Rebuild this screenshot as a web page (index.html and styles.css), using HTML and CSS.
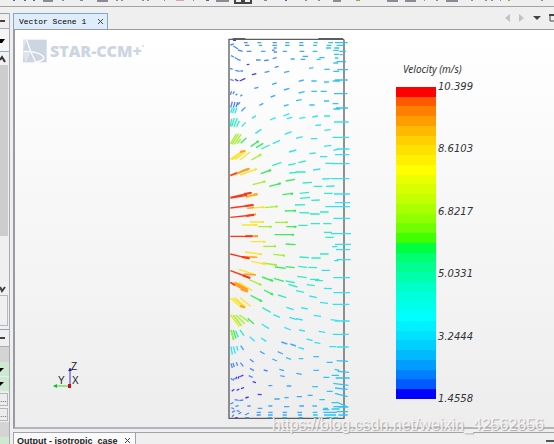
FILE: index.html
```
<!DOCTYPE html>
<html>
<head>
<meta charset="utf-8">
<title>Vector Scene 1</title>
<meta name="viewport" content="width=device-width, initial-scale=1.0">
<link rel="stylesheet" href="styles.css">
</head>
<body>
<div class="toolbar">
	<svg class="tools" height="4" aria-hidden="true">
		<path class="t-blue" d="M13 0h2M24 0h2M33 0h2M206 0h3M285 0h2"/>
		<path class="t-grey" d="M43 1h10M62 0h2M80 0h3M97 1h11M116 0h2M121 0h2M142 0h2M147 0h2M164 0h1M193 0h1M216 1h13M264 0h3M305 0h2M318 0h2M333 1h8M387 1h11M405 1h11M424 0h1M436 0h2M446 1h12M471 0h2M485 0h2M491 0h2M500 0h1M541 0h2"/>
		<path class="t-pink" d="M176 0h8"/>
		<path class="t-olive" d="M356 0h4M508 0h2"/>
		<path class="t-dark" d="M235 0v3h16v-3M241 1h4"/>
	</svg>
</div>
<div class="work">
	<div class="side">
		<div class="head"><svg width="9" height="14"><path d="M0 7h5" stroke="#444" stroke-width="2"/></svg></div>
		<button class="combo" aria-label="Open list"><svg width="8" height="20"><path d="M0 9h5l-3 4h-2z"/></svg></button>
		<button class="scroll" aria-label="Scroll up"><svg width="8" height="13"><path d="M0 8l2-3 3 5" fill="none" stroke="#333" stroke-width="2"/></svg></button>
		<div class="thumb"></div>
		<div class="track"></div>
		<button class="scroll" aria-label="Scroll down"><svg width="8" height="13"><path d="M0 5l2 4 3-4" fill="none" stroke="#444" stroke-width="2"/></svg></button>
		<div class="corner"></div>
		<div class="head props"><svg width="9" height="14"><path d="M0 8h5" stroke="#444" stroke-width="2"/></svg></div>
		<div class="blank"></div>
		<button class="prop" aria-label="Open list"><svg width="8" height="14"><path d="M0 6h4l-4 4z"/></svg></button>
		<button class="prop" aria-label="Open list"><svg width="8" height="14"><path d="M0 5h4l-4 4z"/></svg></button>
		<button class="more">...</button>
		<button class="more">...</button>
		<div class="blank"></div>
		<div class="prop last"></div>
	</div>
	<div class="main">
		<div class="tabs">
			<div class="tab">
				<span>Vector Scene 1</span>
				<button class="close" aria-label="Close Vector Scene 1"><svg width="7" height="7"><path d="M1 1l5 5M6 1l-5 5"/></svg></button>
			</div>
			<div class="nav">
				<button aria-label="Previous"><svg width="6" height="8"><path d="M5 0v8l-5-4z" fill="#c2c2c2"/></svg></button>
				<button aria-label="Next"><svg width="6" height="8"><path d="M0 0v8l5-4z" fill="#c2c2c2"/></svg></button>
				<button aria-label="Tab list"><svg width="8" height="8"><path d="M0 2h8l-4 4z" fill="#444"/></svg></button>
				<button aria-label="Maximize"><svg width="5" height="8"><path d="M6 1h-5v6h5" fill="none" stroke="#444" stroke-width="1"/><path d="M0 1h6" stroke="#444" stroke-width="2"/></svg></button>
			</div>
		</div>
		<div class="scene">
			<div class="left">
				<div class="logo">
					<svg width="24" height="24" viewBox="0 0 72 72">
						<path fill="#ccd5e2" d="M0 2h71v68h-71z"/>
						<path fill="none" stroke="#fff" stroke-width="4" d="M11 2C16 22 26 48 38 69M1 37C26 36 56 42 62 55C65 62 52 67 34 70"/>
						<path fill="#fff" d="M0 35l11-33h-11zM0 39l24-2-14 33h-2l-8-20z" opacity=".35"/>
					</svg>
					<span>STAR-CCM+</span><i></i>
				</div>
				<svg class="axes" width="32" height="34" viewBox="0 0 32 34">
					<path d="M17 9v18" stroke="#3030ff" stroke-width="1"/>
					<path d="M1 27h16" stroke="#30dd30" stroke-width="1"/>
					<path d="M15 12l2-3 2 3z" fill="#2020b0"/>
					<path d="M4 25l-4 2 4 2z" fill="#10c020"/>
					<path d="M15 25h3v4h-3z" fill="#d01010"/>
					<text x="18" y="11">Z</text>
					<text x="5" y="25">Y</text>
					<text x="19" y="25">X</text>
				</svg>
			</div>
			<svg class="plot" viewBox="0 0 420 1182">
				<path class="frame" d="M27 28H370Q372 28 372 32V1165H27zM38 26h38M295 26h74"/>
				<!-- slowest -->
				<g class="v violet">
					<path d="M39 31h9M96 134l13-3M59 153l17-8M45 148l10 5M80 104l8-1M50 1081l8-4M63 1076l9-3M35 1084l8-6M76 1104l10-3M98 1055l10 3M113 1093l12 1M61 1040l9-5M46 1163h7M54 1046l4-8M47 1048l3-8"/>
				</g>
				<g class="v blue">
					<path d="M72 38h11M75 46h13M80 64h14M40 48l14 9M54 60l14 4M33 77l9 4M44 83l9 4M52 88l10 3M30 115l8 3M46 121l13 3M61 123h8M108 90h14M132 92l14-2M134 127l14-3M164 112l12-3M158 86l12-3M31 45l10-3M31 148l10 4M103 175l12-3M158 38h12M156 61l8-1M161 66h10"/>
					<path d="M31 194l4-10M39 192l4-8M47 196l5-5M61 199l6-5M32 233l5-18M40 233l5-17M48 232l5-15M53 224l7-7"/>
					<path d="M33 1000l4 14M39 999l4 12M49 997l4 10M61 998l9 11M90 1015l12 7M86 1037l12 5M90 988l11 8M33 1044l4 6M39 1052l4-8M31 1122l9-4M44 1109l12 2M58 1112l12-2M82 1128h10M34 1133l8 4M46 1129l10-2M36 1147l9-5M50 1142l9 2M75 1155l12-6M110 1155h12M75 1163h12M55 1152l9-5M36 1160l6-6M131 1020l12 3"/>
				</g>
				<g class="v azure">
					<path d="M112 38h12M116 46h10M123 64h13M157 46h14M161 54h9M196 38h12M195 46h14M188 64h13M238 38h12M237 46h14M239 64h14M212 87h12M248 79h16M242 88h14M192 127l16-3M156 163l14-4M192 180l16-5M152 201l14-5M118 226l12-6M236 154l15-4M64 244l12-12"/>
					<path d="M181 1037l13 3M145 1067h12M163 1107h16M193 1103h13M230 1100h16M263 1096h15M200 1068h14M178 1018l14 4M229 1030l16 3M173 965l16 7M157 987l14 6M120 964l14 8M145 1128h12M192 1130h16M238 1128h14M113 1135h14M110 1147h13M145 1147h13M188 1147h13M232 1147h14M144 1155h14M188 1155h12M234 1155h12M142 1163h14M187 1163h14M235 1163h14M62 947l9 13M211 942l17 6M184 936l18 6"/>
				</g>
				<g class="v sky">
					<path d="M281 38h12M279 46h12M278 64h14M298 83h16M290 88h12M267 115l13-2M274 153h16M313 118h16M312 156h15M236 189l18-4M274 184h17M302 184h18M192 228l14-4M228 212l17-3M268 225h16M312 213h15M338 221h17M325 38h14M320 46h14M318 54h15M345 38h38M350 46h20M343 54h15M340 61h16M358 64h20M342 73h16M345 84h10M360 74h8M340 99h14M350 95h28M340 124h17M352 119h32M338 153h22M345 150h38M342 191h40M340 237h20M348 234h36"/>
					<path d="M280 1021h17M344 1018l14 3M353 1024l34 3M310 1042h18M335 1036h22M347 1044h42M277 1070h17M340 1060l45 6M320 1084h18M345 1074l38 4M345 1090l38 10M298 1109h17M335 1118h20M350 1116l35 16M277 1128h14M310 1135h14M340 1130h28M278 1147h14M308 1139h20M335 1137h24M355 1131h30M279 1155h14M310 1147h40M312 1155h36M350 1145h34M282 1163h12M318 1163h16M355 1155h28M340 1163h14M198 983l15 5M236 986h14M280 980h17M320 997h18M350 992l34 2"/>
				</g>
				<g class="v cyan">
					<path d="M32 248l5-14M38 249l5-15M45 250l5-16M96 265l12-8M150 270l17-7M190 258l18-7M200 266l17-4M238 265l18-3M277 261l17-3M312 258h18M286 286l17-1M342 276h44M106 310l18-12M194 313l21-8M313 301l19-2M158 341l22-10M228 325l20-5M272 326h20M338 322h49M207 366l22-6M312 349l22-3M268 371l19-2M300 380h22M340 361l18-4M350 357h38M345 374h43M316 400h24M336 401h53M279 420l22-3M307 447l24-1M333 446h55M342 492h48"/>
					<path d="M345 518h45M340 530h50M340 565h50M333 611h60M345 643h48M348 659h42M350 689h42M340 743h50M340 788h50M338 823h50M316 530h26M345 873h44M338 913h48M336 650h16M342 692h14M305 721h25M312 775l24 1M300 817l24 3M199 832l22 7M243 833l20 4M281 856l22 3M268 798l23 5M228 782l24 5M160 854l20 8M208 862l22 7M228 866l20 4M332 869l22 3M125 882l22 14M193 892l20 8M237 900l18 3M296 904l20 3M89 920l15 14M123 924l16 10M235 952l17 5M260 927l18 5M283 937l18 3M328 950h20M350 951h36M33 950l4 24M40 949l6 22M50 948l4 14"/>
				</g>
				<g class="v aqua">
					<path d="M31 289l4-22M35 290l8-26M42 290l10-26M50 290l8-18M65 290l12-13M124 357l25-12M157 407l27-10M205 405l22-4M235 398l22-5M208 429l22-2M226 426h31M248 459l28-2M281 469h26M318 469l26-1M239 490l28-3M240 505l30-3M312 490h26M274 511l25-1M225 525l30-1M238 548l30 1M270 552h29M300 546h26M235 586h28M272 581h28M310 581h24M312 607h24M316 622h25M239 681l28 2M300 672h26M274 684h28M235 709l26 3M265 712l26 1M197 753l28 5M232 739l28 4M270 748h28M285 752h24M205 763l27 8M260 764l24 3M174 795l25 8M127 833l25 14M60 900l12 17M47 902l8 20"/>
				</g>
				<g class="v green">
					<path d="M62 340l17-16M92 350l24-17M108 353l22-13M122 431l31-11M148 469l34-9M197 453l28-5M187 494l32-4M194 543l34-1M199 590h30M164 614h58M197 642l30 2M165 711l32 4M197 710l27 3M162 745l30 9M126 741l33 12M132 780l27 14M83 865l19 17M33 900l8 30M40 900l8 26M92 796l34 18"/>
					<path class="tip" d="M109 338l7-5M146 423l7-3M174 462l8-2M212 491h7M221 542h7M222 590h7M215 614h7M151 749l8 4M152 790l7 4M118 810l8 4"/>
				</g>
				<g class="v lime">
					<path d="M31 342l18-30M36 343l20-32M43 343l20-30M52 341l10-14M94 390l30-17M98 464l38-10M135 533l38-4M115 590h40M165 577h38M130 649h38M160 673l35 4M128 699l42 6M88 749l36 16M32 855l26 34M40 855l25 33M48 855l26 26M58 855l28 20M34 902l6 26"/>
					<path class="tip" d="M117 377l7-4M129 456l7-2M166 530l7-1M148 590h7M196 577h7M161 649h7M188 676l7 1M162 704l8 1M117 762l7 3"/>
				</g>
				<g class="v yellow">
					<path d="M31 388l35-24M36 389l38-28M45 388l32-22M60 389l30-23M60 435l50-18M78 503l35-8M88 535l45-4M66 585h46M90 576h42M92 635h44M75 666l50 7M66 680l45 2M94 694l42 9M56 718l50 16M56 757l40 24M31 805l35 28M38 803l38 31M46 804l30 26M60 803l32 26M34 856l24 33"/>
					<path class="tip" d="M102 420l8-3M126 532l7-1M105 585h7M125 576h7M129 635h7M118 672l7 1M129 701l7 2"/>
				</g>
				<g class="v orange">
					<path d="M31 438l52-22M36 436l50-18M45 434l44-18M78 500l34-8M82 535l20-3M78 559l30-6M80 618h34M72 680l40 2M72 732l36 3M31 757l50 28M40 757l44 26M46 757l38 21"/>
					<path class="tip" d="M64 424l24-8M60 366l16-4M62 778l22 7M60 827l15 6M100 494l12-2M96 556l12-3M103 619h10"/>
				</g>
				<g class="v red">
					<path d="M31 502l64-14M31 504l50-8M31 534l70-9M31 562l70-7M31 619h68M31 672l58 14M31 722l60 22M31 436l20-8M31 757l14 9"/>
					<path class="tip" d="M72 492l22-3M76 528l24-3M80 557l22-3M76 619h20M66 681l22 4M68 736l22 8"/>
				</g>
			</svg>
			<div class="legend">
				<h4>Velocity (m/s)</h4>
				<div class="scale">
					<div class="bar"></div>
					<ul>
						<li>10.399</li>
						<li>8.6103</li>
						<li>6.8217</li>
						<li>5.0331</li>
						<li>3.2444</li>
						<li>1.4558</li>
					</ul>
				</div>
			</div>
		</div>
		<div class="output">
			<div class="tab">
				<span>Output - isotropic_case</span>
				<button class="close" aria-label="Close output"><svg width="7" height="7"><path d="M1 1l5 5M6 1l-5 5"/></svg></button>
			</div>
			<button class="min" aria-label="Minimize"></button>
		</div>
	</div>
</div>
<div class="mark">https://blog.csdn.net/weixin_42562856</div>
</body>
</html>
```

FILE: styles.css
```
*
{
	box-sizing: border-box;
}
body
{
	margin: 0;
	height: 100vh;
	display: flex;
	flex-direction: column;
	overflow: hidden;
	position: relative;
	background: #efefef;
	font-family: "Liberation Sans", Arial, sans-serif;
	color: #222;
}
svg
{
	display: block;
}
button
{
	border: 0;
	padding: 0;
	margin: 0;
	background: none;
	color: #222;
	font-family: inherit;
}
.toolbar
{
	height: 7px;
	flex: none;
	border-bottom: 1px solid #a3a3a3;
}
.tools
{
	width: 100%;
}
.tools path
{
	fill: none;
	stroke-width: 2;
}
.t-blue { stroke: #55609c; }
.t-grey { stroke: #8b8b92; }
.t-pink { stroke: #d8a8a8; }
.t-olive { stroke: #a8a050; }
.t-dark { stroke: #444; }
.work
{
	flex: 1;
	min-height: 0;
	display: flex;
	gap: 3px;
	padding-top: 6px;
}

/* left panel, mostly scrolled out */
.side
{
	width: 10px;
	flex: none;
	display: flex;
	flex-direction: column;
	border-right: 1px solid #a8acb2;
	overflow: hidden;
}
.side > *
{
	flex: none;
	overflow: hidden;
}
.head
{
	height: 16px;
	border-top: 1px solid #8fa3b5;
	border-bottom: 1px solid #a9adb3;
}
.combo
{
	height: 23px;
	background: #f5f5f5;
	border-bottom: 1px solid #8fb0c8;
}
.scroll
{
	height: 13px;
	background: #f0f0f0;
}
.thumb
{
	height: 171px;
	margin-right: 1px;
	background: #cdcdcd;
}
.track
{
	height: 46px;
}
.corner
{
	height: 31px;
	margin: 0 1px 3px 0;
	border: 1px solid #b8b8b8;
	border-left: 0;
}
.props
{
	height: 18px;
}
.blank
{
	height: 15px;
	background: #d4d4d4;
}
.prop
{
	height: 15px;
	background: #cfe8d2;
	border-bottom: 1px solid #e4f2e6;
}
.more
{
	height: 13px;
	margin: 1px 1px 1px 0;
	border: 1px solid #b5b5b5;
	border-left: 0;
	background: #ececec;
	font-size: 8px;
	line-height: 8px;
	text-align: left;
}
.last
{
	height: 14px;
}

/* scene window */
.main
{
	flex: 1;
	min-width: 0;
	display: flex;
	flex-direction: column;
}
.tabs
{
	height: 16px;
	display: flex;
	justify-content: space-between;
}
.tab
{
	display: flex;
	align-items: center;
}
.tabs .tab
{
	width: 95px;
	padding: 0 3px 0 5px;
	justify-content: space-between;
	background: #dfecf9;
	border: 1px solid #7fa9cc;
	border-bottom: 0;
	color: #000;
	font: 8px "Liberation Mono", monospace;
}
.close path
{
	fill: none;
	stroke: #444;
	stroke-width: 1;
}
.nav
{
	display: flex;
	align-items: center;
	gap: 8px;
	padding-bottom: 6px;
}
.scene
{
	flex: 1;
	min-height: 0;
	display: grid;
	grid-template-columns: 1fr 140px 194px;
	border: 1px solid #9a9aa2;
	border-width: 1px 0 2px 2px;
	border-bottom-color: #b4b5ba;
	background: linear-gradient(#fff, #ededed);
	overflow: hidden;
}
.left
{
	display: flex;
	flex-direction: column;
	justify-content: space-between;
	padding: 9px 0 34px 8px;
}
.logo
{
	display: flex;
	align-items: center;
	gap: 3px;
	color: #ccd5e2;
	font: 800 16px/24px "Open Sans", sans-serif;
}
.logo i
{
	width: 2px;
	height: 2px;
	margin-bottom: 10px;
	margin-left: -3px;
	background: #dde3ec;
}
.axes
{
	margin-left: 30px;
	font-size: 10px;
	fill: #222;
}
.plot
{
	width: 140px;
	height: 394px;
}
.frame
{
	fill: none;
	stroke: #5c5c5c;
	stroke-width: 4;
}
.v path
{
	fill: none;
	stroke-width: 4;
}
.v .tip
{
	stroke-width: 6;
}
.violet { stroke: #4a35ff; }
.blue { stroke: #4a8cff; }
.azure { stroke: #40a8ff; }
.sky { stroke: #32c2f8; }
.cyan { stroke: #32e2f4; }
.aqua { stroke: #30ecc4; }
.green { stroke: #3cea60; }
.lime { stroke: #a4f030; }
.yellow { stroke: #fbe430; }
.orange { stroke: #ffa024; }
.red { stroke: #ff3414; }
.legend
{
	padding: 32px 0 0 36px;
	color: #333;
}
.legend h4
{
	margin: 0 0 11px 7px;
	font: italic 10px/14px "Noto Sans", sans-serif;
}
.scale
{
	display: flex;
	gap: 2px;
	height: 312px;
}
.bar
{
	width: 40px;
	background: linear-gradient(
		#ff0000 0 3.125%, #ff5a00 0 6.25%, #ff8000 0 9.375%, #ff9d00 0 12.5%,
		#ffb900 0 15.625%, #ffd000 0 18.75%, #ffe100 0 21.875%, #fff000 0 25%,
		#ffff00 0 28.125%, #eaff00 0 31.25%, #d8ff00 0 34.375%, #c4ff00 0 37.5%,
		#aaff00 0 40.625%, #90ff00 0 43.75%, #70ff00 0 46.875%, #40ff00 0 50%,
		#00ff40 0 53.125%, #00ff70 0 56.25%, #00ff90 0 59.375%, #00ffaa 0 62.5%,
		#00ffc8 0 65.625%, #00ffdc 0 68.75%, #00ffea 0 71.875%, #00ffff 0 75%,
		#00f0ff 0 78.125%, #00e0ff 0 81.25%, #00d0ff 0 84.375%, #00b9ff 0 87.5%,
		#009dff 0 90.625%, #0080ff 0 93.75%, #005aff 0 96.875%, #0000ff 0);
}
.scale ul
{
	list-style: none;
	margin: -7px 0;
	padding: 0;
	display: flex;
	flex-direction: column;
	justify-content: space-between;
	font: italic 10px/14px "DejaVu Sans", sans-serif;
}

/* output window under it */
.output
{
	height: 12px;
	flex: none;
	margin-top: 3px;
	display: flex;
	justify-content: space-between;
	border-top: 1px solid #a0a3a8;
	overflow: hidden;
}
.output .tab
{
	height: 16px;
	width: 123px;
	padding: 0 4px 0 3px;
	justify-content: space-between;
	background: #fafafa;
	border: 1px solid #a0a3a8;
	border-top: 0;
	font-size: 9px;
	font-weight: bold;
}
.min
{
	width: 8px;
	height: 2px;
	margin-top: 7px;
	background: #555;
}
.mark
{
	position: absolute;
	right: 10px;
	bottom: 9px;
	font-size: 16px;
	line-height: 20px;
	color: #f4f4f4;
	text-shadow: 1px 1px 1px #a8a8a8;
}
```
